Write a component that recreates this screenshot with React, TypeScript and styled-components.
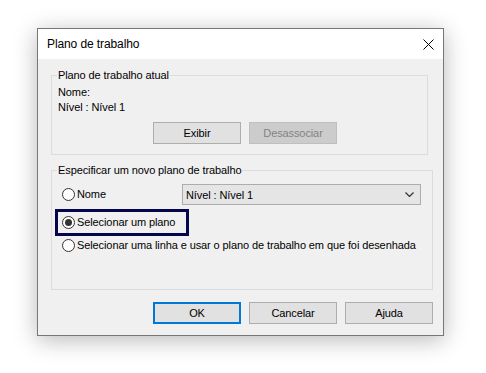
import React from 'react';
import styled, { createGlobalStyle } from 'styled-components';

const GlobalStyle = createGlobalStyle`
  html, body {
    margin: 0;
    padding: 0;
    background: #ffffff;
  }
  body {
    font-family: "Liberation Sans", Arial, sans-serif;
    font-size: 11px;
    letter-spacing: -0.1px;
    color: #000;
  }
`;

const Page = styled.div`
  width: 486px;
  height: 373px;
  padding: 28px 0 0 37px;
  box-sizing: border-box;
`;

const Dialog = styled.div`
  width: 407px;
  height: 308px;
  box-sizing: border-box;
  border: 1px solid #777777;
  background: #f0f0f0;
  box-shadow: 0 4px 22px rgba(0, 0, 0, 0.28);
  display: flex;
  flex-direction: column;
`;

const TitleBar = styled.div`
  height: 30px;
  background: #ffffff;
  display: flex;
  align-items: center;
  justify-content: space-between;
  padding: 0 9px 0 9px;
  flex-shrink: 0;
`;

const Title = styled.span`
  font-size: 12px;
  line-height: 16px;
`;

const CloseButton = styled.button`
  width: 12px;
  height: 12px;
  padding: 0;
  border: none;
  background: transparent;
  display: flex;
  align-items: center;
  justify-content: center;
`;

const Body = styled.div`
  flex: 1;
  display: flex;
  flex-direction: column;
  padding: 8px 0 0 13px;
`;

const Group = styled.fieldset<{ $right: number; $bottom: number }>`
  margin: 0 ${(p) => p.$right}px 0 0;
  padding: 0 0 ${(p) => p.$bottom}px 5px;
  border: 1px solid #dcdcdc;
  min-inline-size: 0;
  & + & {
    margin-top: 7px;
  }
`;

const Legend = styled.legend`
  padding: 0 1px;
  line-height: 16px;
`;

const InfoLine = styled.div`
  line-height: 15px;
  padding-left: 1px;
  &:first-of-type {
    margin-top: 2px;
  }
`;

const ButtonRow = styled.div<{ $indent: number; $top: number }>`
  display: flex;
  gap: 8px;
  padding-left: ${(p) => p.$indent}px;
  margin-top: ${(p) => p.$top}px;
`;

const Button = styled.button<{ $default?: boolean }>`
  width: 88px;
  height: 22px;
  box-sizing: border-box;
  padding: 0;
  font-family: inherit;
  font-size: 11px;
  letter-spacing: -0.1px;
  color: #000;
  background: #e1e1e1;
  border: ${(p) => (p.$default ? '2px solid #0078d7' : '1px solid #adadad')};

  &:disabled {
    background: #cccccc;
    border-color: #bfbfbf;
    color: #838383;
  }
`;

const OptionRow = styled.div<{ $top: number }>`
  display: flex;
  align-items: center;
  margin-top: ${(p) => p.$top}px;
  padding-left: 5px;
`;

const Highlight = styled.div`
  display: flex;
  align-items: center;
  width: 134px;
  height: 27px;
  box-sizing: border-box;
  border: 3px solid #05054d;
  margin: 4px 0 0 -2px;
  padding-left: 4px;
`;

const RadioLabel = styled.label`
  display: flex;
  align-items: center;
  gap: 2px;
  line-height: 17px;
  white-space: nowrap;
`;

const RadioCircle = styled.span<{ $checked?: boolean }>`
  width: 13px;
  height: 13px;
  box-sizing: border-box;
  border-radius: 50%;
  border: 1px solid #333333;
  background: #ffffff;
  display: flex;
  align-items: center;
  justify-content: center;

  &::after {
    content: '';
    width: 7px;
    height: 7px;
    border-radius: 50%;
    background: ${(p) => (p.$checked ? '#333333' : 'transparent')};
  }
`;

const Combo = styled.div`
  margin-left: auto;
  margin-right: 11px;
  width: 239px;
  height: 21px;
  box-sizing: border-box;
  border: 1px solid #adadad;
  background: #e5e5e5;
  display: flex;
  align-items: center;
  justify-content: space-between;
  padding: 0 6px 0 3px;
`;

const Footer = styled.div`
  display: flex;
  justify-content: flex-end;
  gap: 8px;
  padding-right: 10px;
  margin-top: 12px;
`;

const Radio: React.FC<{ checked?: boolean; children: React.ReactNode }> = ({ checked, children }) => (
  <RadioLabel>
    <RadioCircle $checked={checked} />
    {children}
  </RadioLabel>
);

const App: React.FC = () => {
  return (
    <>
      <GlobalStyle />
      <Page>
        <Dialog>
          <TitleBar>
            <Title>Plano de trabalho</Title>
            <CloseButton aria-label="Fechar">
              <svg width="11" height="11" viewBox="0 0 11 11">
                <path d="M0.5 0.5 L10.5 10.5 M10.5 0.5 L0.5 10.5" stroke="#000" strokeWidth="1" fill="none" />
              </svg>
            </CloseButton>
          </TitleBar>

          <Body>
            <Group $right={15} $bottom={10}>
              <Legend>Plano de trabalho atual</Legend>
              <InfoLine>Nome:</InfoLine>
              <InfoLine>Nível : Nível 1</InfoLine>
              <ButtonRow $indent={96} $top={7}>
                <Button>Exibir</Button>
                <Button disabled>Desassociar</Button>
              </ButtonRow>
            </Group>

            <Group $right={10} $bottom={35}>
              <Legend>Especificar um novo plano de trabalho</Legend>
              <OptionRow $top={6}>
                <Radio>Nome</Radio>
                <Combo>
                  <span>Nível : Nível 1</span>
                  <svg width="9" height="5" viewBox="0 0 9 5">
                    <path d="M0.5 0.5 L4.5 4.5 L8.5 0.5" stroke="#333" strokeWidth="1.2" fill="none" />
                  </svg>
                </Combo>
              </OptionRow>
              <Highlight>
                <Radio checked>Selecionar um plano</Radio>
              </Highlight>
              <OptionRow $top={1}>
                <Radio>Selecionar uma linha e usar o plano de trabalho em que foi desenhada</Radio>
              </OptionRow>
            </Group>

            <Footer>
              <Button $default>OK</Button>
              <Button>Cancelar</Button>
              <Button>Ajuda</Button>
            </Footer>
          </Body>
        </Dialog>
      </Page>
    </>
  );
};

export default App;
